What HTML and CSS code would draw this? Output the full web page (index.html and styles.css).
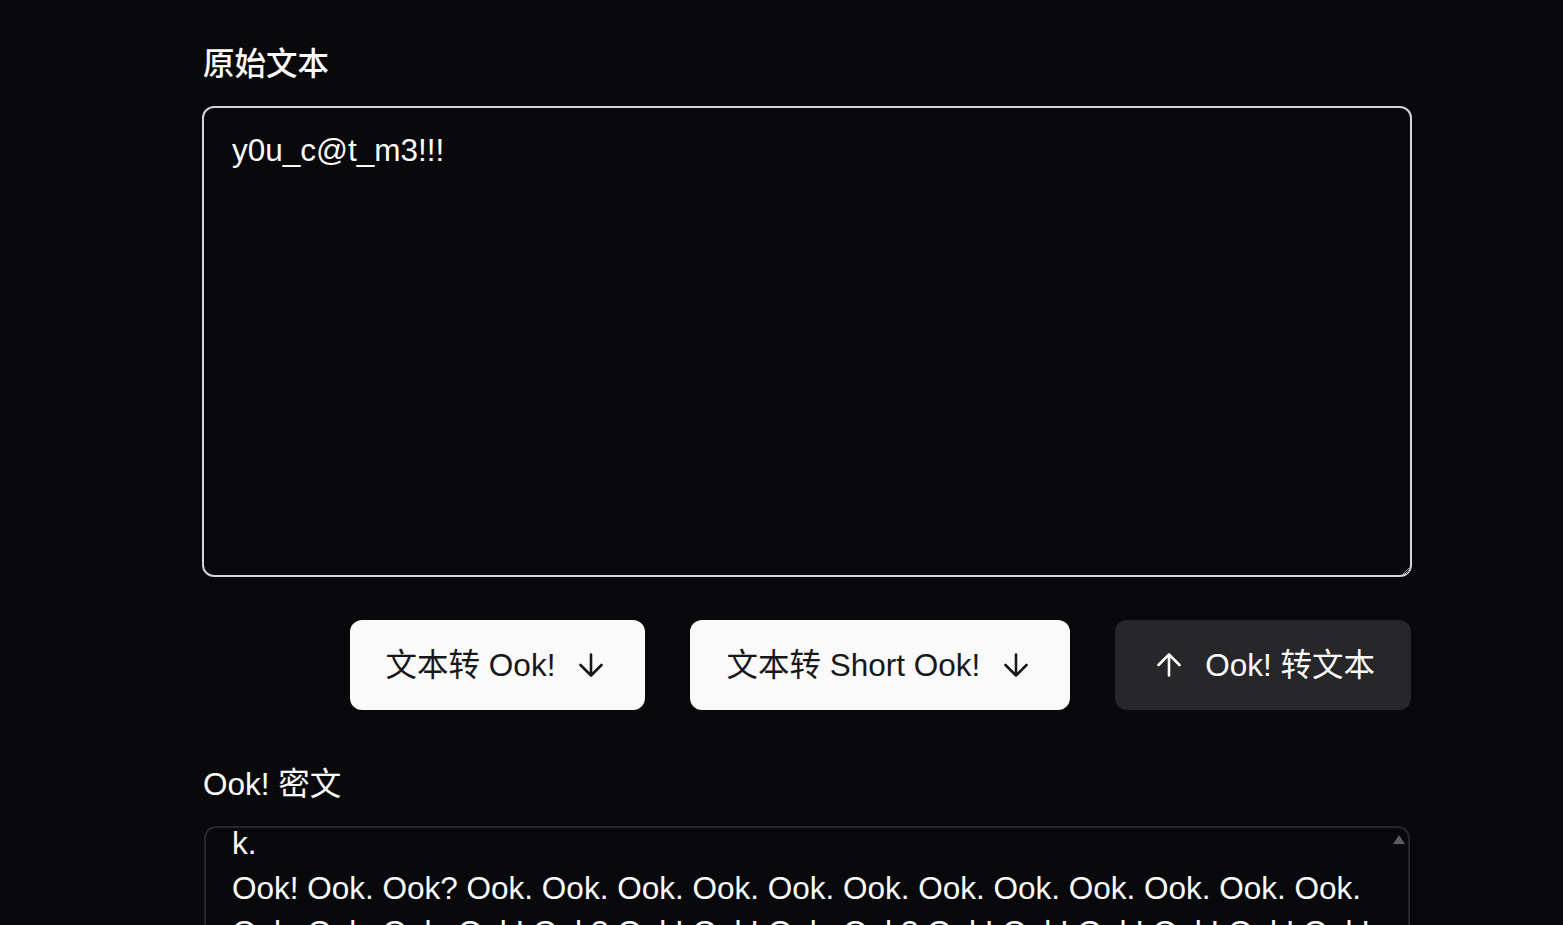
FILE: index.html
```html
<!DOCTYPE html>
<html lang="zh-CN">
<head>
<meta charset="utf-8">
<title>Ook! 转换</title>
<link rel="stylesheet" href="styles.css">
</head>
<body>
<main class="page">
  <section class="field">
    <label class="label label-strong" for="src">原始文本</label>
    <textarea id="src" class="input input-focus">y0u_c@t_m3!!!</textarea>
  </section>

  <div class="actions">
    <button class="btn btn-light">
      <span>文本转 Ook!</span>
      <svg class="arrow" viewBox="0 0 26 24" aria-hidden="true"><path d="M13 1.5V22.5M2.5 12L13 22.5L23.5 12"/></svg>
    </button>
    <button class="btn btn-light">
      <span>文本转 Short Ook!</span>
      <svg class="arrow" viewBox="0 0 26 24" aria-hidden="true"><path d="M13 1.5V22.5M2.5 12L13 22.5L23.5 12"/></svg>
    </button>
    <button class="btn btn-dark btn-rev">
      <svg class="arrow" viewBox="0 0 26 24" aria-hidden="true"><path d="M13 22.5V1.5M2.5 12L13 1.5L23.5 12"/></svg>
      <span>Ook! 转文本</span>
    </button>
  </div>

  <section class="field field-out">
    <div class="label">Ook! 密文</div>
    <div class="output">
      <div class="output-text">
        <div class="line">k.</div>
        <div class="line">Ook! Ook. Ook? Ook. Ook. Ook. Ook. Ook. Ook. Ook. Ook. Ook. Ook. Ook. Ook.</div>
        <div class="line">Ook. Ook. Ook. Ook! Ook? Ook! Ook! Ook. Ook? Ook! Ook! Ook! Ook! Ook! Ook!</div>
      </div>
      <span class="scroll-up"></span>
    </div>
  </section>
</main>
</body>
</html>
```

FILE: styles.css
```css
html, body {
  margin: 0;
  padding: 0;
  background: #09090b;
  color: #fafafa;
  height: 100%;
  overflow: hidden;
}

body {
  font-family: "Liberation Sans", Arial, "Noto Sans CJK SC", sans-serif;
  font-size: 31.5px;
  line-height: 44px;
}

.page {
  padding: 42px 151px 0 202px;
}

.field {
  display: flex;
  flex-direction: column;
}

.label {
  display: block;
  padding-left: 1px;
  margin-bottom: 20px;
  line-height: 44px;
}

.label-strong {
  font-weight: 500;
}

.input {
  box-sizing: border-box;
  height: 471px;
  width: 100%;
  margin: 0;
  padding: 20px 28px;
  background: #09090b;
  color: #fafafa;
  font: inherit;
  line-height: 44px;
  border: 2px solid #d4d4d8;
  border-radius: 12px;
  outline: none;
  resize: vertical;
  color-scheme: dark;
}

.actions {
  display: flex;
  justify-content: flex-end;
  gap: 45px;
  margin-top: 43px;
  margin-right: 1px;
}

.btn {
  display: flex;
  align-items: center;
  gap: 23px;
  height: 90px;
  padding: 0 41px 0 36px;
  border: none;
  border-radius: 12px;
  font: inherit;
  line-height: 44px;
  cursor: pointer;
}

.btn-rev {
  padding: 0 36px 0 41px;
  gap: 23px;
}

.btn-light {
  background: #fafafa;
  color: #18181b;
}

.btn-dark {
  background: #27272a;
  color: #fafafa;
}

.arrow {
  width: 26px;
  height: 24px;
  fill: none;
  stroke: currentColor;
  stroke-width: 2.6;
  stroke-linecap: round;
  stroke-linejoin: round;
  flex: none;
}

.field-out {
  margin-top: 52px;
}

.field-out .label {
  margin-bottom: 20px;
}

.output {
  position: relative;
  box-sizing: border-box;
  margin: 0 2px;
  height: 300px;
  border: 2px solid #27272a;
  border-radius: 12px;
  overflow: hidden;
  padding: 0 40px 0 26px;
}

.output-text {
  margin-top: -7px;
  white-space: nowrap;
}

.line {
  line-height: 44.5px;
}

.scroll-up {
  position: absolute;
  top: 7px;
  right: 3px;
  width: 0;
  height: 0;
  border-left: 6px solid transparent;
  border-right: 6px solid transparent;
  border-bottom: 9px solid #5b5b60;
}
```
